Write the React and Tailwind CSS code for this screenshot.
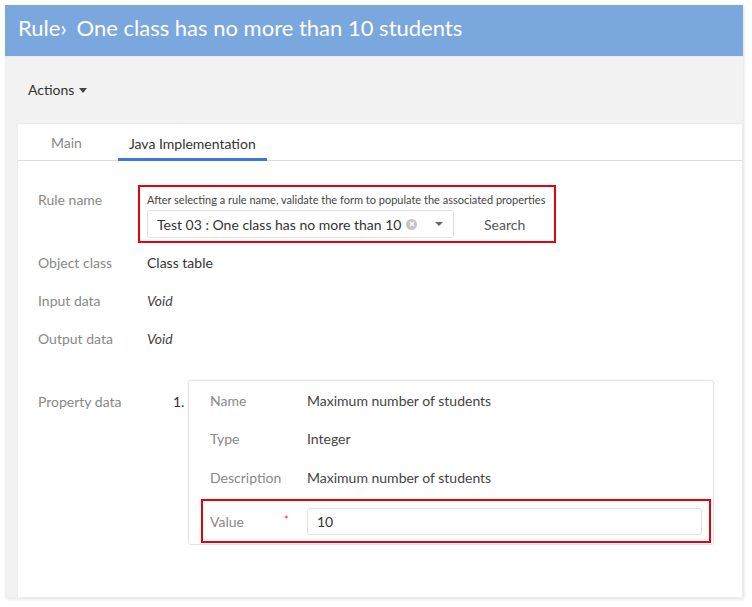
export default function App() {
  const font = { fontFamily: 'Lato, "Open Sans", sans-serif' };
  return (
    <div className="w-[752px] h-[607px] bg-white pt-[5px] pl-[5px] pr-[9px]" style={font}>
      <div className="bg-[#f2f2f2] h-[593px] shadow-[1px_1px_3px_rgba(0,0,0,0.12)] flex flex-col">
        <div className="h-[52px] bg-[#7ba7df] flex items-center pl-[13px] pb-[7px] text-white text-[22px] border-b border-[#e9eef5]">
          <span>Rule›</span>
          <span className="ml-[10px]">One class has no more than 10 students</span>
        </div>
        <div className="h-[67px] flex items-center pl-[23px] text-[14px] text-[#333]">
          <span className="-mt-[2px]">Actions</span>
          <span className="ml-[5px] inline-block w-0 h-0 border-l-[4px] border-r-[4px] border-t-[5px] border-l-transparent border-r-transparent border-t-[#444]"></span>
        </div>
        <div className="ml-[13px] mr-[1px] bg-white flex-1 mb-[1px] shadow-[0_0_2px_rgba(0,0,0,0.08)]">
          <div className="h-[37px] border-b border-[#dcdcdc] flex items-stretch pl-[22px] text-[14px]">
            <div className="px-[11px] flex items-center text-[#888]">Main</div>
            <div className="ml-[25px] px-[11px] flex items-center text-[#333] border-b-[3px] border-[#3c78d8] pt-[4px] -mb-[1px]">Java Implementation</div>
          </div>
          <div className="pl-[20px] pt-[24px] text-[14px]">
            <div className="flex">
              <div className="w-[100px] pt-[4px] text-[#888]">Rule name</div>
              <div className="w-[418px] h-[58px] border-2 border-[#e8000b] pl-[7px] pt-[6px]">
                <div className="text-[11px] leading-[13px] text-[#444] whitespace-nowrap">After selecting a rule name, validate the form to populate the associated properties</div>
                <div className="flex items-center mt-[4px]">
                  <div className="w-[307px] h-[28px] border border-[#e0e0e0] rounded-[3px] flex items-center pl-[9px] text-[#333]">
                    <span className="w-[246px] overflow-hidden whitespace-nowrap">Test 03 : One class has no more than 10</span>
                    <span className="ml-auto w-[11px] h-[11px] rounded-full bg-[#c4c4c4] flex items-center justify-center mr-[18px]">
                      <svg width="6" height="6" viewBox="0 0 6 6"><path d="M1 1L5 5M5 1L1 5" stroke="white" strokeWidth="1.3" /></svg>
                    </span>
                    <span className="inline-block w-0 h-0 border-l-[4px] border-r-[4px] border-t-[4px] border-l-transparent border-r-transparent border-t-[#666] mr-[10px]"></span>
                  </div>
                  <div className="ml-[30px] text-[#555]">Search</div>
                </div>
              </div>
            </div>
            <div className="flex h-[38px] items-center">
              <div className="w-[109px] text-[#888]">Object class</div>
              <div className="text-[#333]">Class table</div>
            </div>
            <div className="flex h-[38px] items-center">
              <div className="w-[109px] text-[#888]">Input data</div>
              <div className="text-[#444] italic">Void</div>
            </div>
            <div className="flex h-[39px] items-center">
              <div className="w-[109px] text-[#888]">Output data</div>
              <div className="text-[#444] italic">Void</div>
            </div>
            <div className="flex mt-[22px]">
              <div className="w-[135px] pt-[11px] text-[#888]">Property data</div>
              <div className="w-[15px] pt-[11px] text-[#333]">1.</div>
              <div className="w-[526px] h-[165px] border border-[#e2e2e2] rounded-[3px] shadow-[0_0_2px_rgba(0,0,0,0.06)]">
                <div className="flex h-[38px] items-center pl-[21px]">
                  <div className="w-[97px] text-[#888]">Name</div>
                  <div className="text-[#444]">Maximum number of students</div>
                </div>
                <div className="flex h-[39px] items-center pl-[21px]">
                  <div className="w-[97px] text-[#888]">Type</div>
                  <div className="text-[#444]">Integer</div>
                </div>
                <div className="flex h-[38px] items-center pl-[21px]">
                  <div className="w-[97px] text-[#888]">Description</div>
                  <div className="text-[#444]">Maximum number of students</div>
                </div>
                <div className="ml-[12px] mr-[2px] mt-[3px] h-[44px] border-2 border-[#e8000b] flex items-center pl-[7px]">
                  <div className="w-[74px] text-[#888]">Value</div>
                  <div className="w-[23px] text-[#e53935] text-[11px] -mt-[2px]">*</div>
                  <div className="w-[395px] h-[27px] border border-[#e2e2e2] rounded-[3px] flex items-center pl-[9px] text-[#333]">10</div>
                </div>
              </div>
            </div>
          </div>
        </div>
      </div>
    </div>
  );
}
